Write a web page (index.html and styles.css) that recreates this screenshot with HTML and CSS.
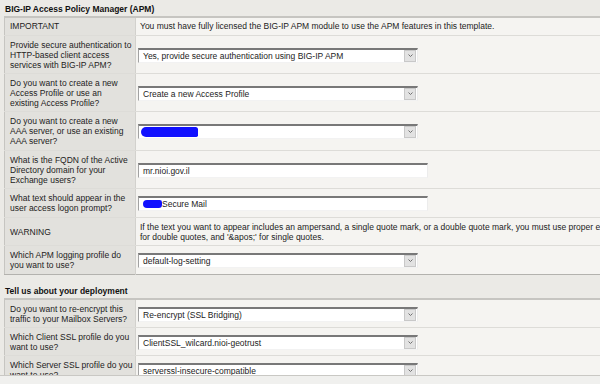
FILE: index.html
```html
<!DOCTYPE html>
<html lang="en">
<head>
  <meta charset="UTF-8" />
  <title>BIG-IP APM</title>
  <link rel="stylesheet" href="styles.css">
</head>
<body>
  <div class="page">
    <h2 class="section">BIG-IP Access Policy Manager (APM)</h2>
    <table class="form">
      <colgroup><col class="col-label"><col></colgroup>
      <tr class="short">
        <td class="label">IMPORTANT</td>
        <td class="value">You must have fully licensed the BIG-IP APM module to use the APM features in this template.</td>
      </tr>
      <tr>
        <td class="label">Provide secure authentication to<br>HTTP-based client access<br>services with BIG-IP APM?</td>
        <td class="value">
          <div class="select">
            <span class="select-text">Yes, provide secure authentication using BIG-IP APM</span>
            <span class="select-btn"><svg width="5" height="3" viewBox="0 0 5 3"><path d="M0.5 0.5 L2.5 2.5 L4.5 0.5" fill="none" stroke="#707070" stroke-width="1"/></svg></span>
          </div>
        </td>
      </tr>
      <tr>
        <td class="label">Do you want to create a new<br>Access Profile or use an<br>existing Access Profile?</td>
        <td class="value">
          <div class="select">
            <span class="select-text">Create a new Access Profile</span>
            <span class="select-btn"><svg width="5" height="3" viewBox="0 0 5 3"><path d="M0.5 0.5 L2.5 2.5 L4.5 0.5" fill="none" stroke="#707070" stroke-width="1"/></svg></span>
          </div>
        </td>
      </tr>
      <tr class="tall">
        <td class="label">Do you want to create a new<br>AAA server, or use an existing<br>AAA server?</td>
        <td class="value">
          <div class="select">
            <span class="select-text"><span class="redact redact-long"></span></span>
            <span class="select-btn"><svg width="5" height="3" viewBox="0 0 5 3"><path d="M0.5 0.5 L2.5 2.5 L4.5 0.5" fill="none" stroke="#707070" stroke-width="1"/></svg></span>
          </div>
        </td>
      </tr>
      <tr>
        <td class="label">What is the FQDN of the Active<br>Directory domain for your<br>Exchange users?</td>
        <td class="value"><div class="field">mr.nioi.gov.il</div></td>
      </tr>
      <tr class="tall">
        <td class="label">What text should appear in the<br>user access logon prompt?</td>
        <td class="value"><div class="field"><span class="redact redact-short"></span>Secure Mail</div></td>
      </tr>
      <tr>
        <td class="label">WARNING</td>
        <td class="value">If the text you want to appear includes an ampersand, a single quote mark, or a double quote mark, you must use proper escaping: '&amp;amp;' for ampersands, '&amp;quot;'<br>for double quotes, and '&amp;apos;' for single quotes.</td>
      </tr>
      <tr class="tall">
        <td class="label">Which APM logging profile do<br>you want to use?</td>
        <td class="value">
          <div class="select">
            <span class="select-text">default-log-setting</span>
            <span class="select-btn"><svg width="5" height="3" viewBox="0 0 5 3"><path d="M0.5 0.5 L2.5 2.5 L4.5 0.5" fill="none" stroke="#707070" stroke-width="1"/></svg></span>
          </div>
        </td>
      </tr>
    </table>

    <h2 class="section section-gap">Tell us about your deployment</h2>
    <table class="form">
      <colgroup><col class="col-label"><col></colgroup>
      <tr>
        <td class="label">Do you want to re-encrypt this<br>traffic to your Mailbox Servers?</td>
        <td class="value">
          <div class="select">
            <span class="select-text">Re-encrypt (SSL Bridging)</span>
            <span class="select-btn"><svg width="5" height="3" viewBox="0 0 5 3"><path d="M0.5 0.5 L2.5 2.5 L4.5 0.5" fill="none" stroke="#707070" stroke-width="1"/></svg></span>
          </div>
        </td>
      </tr>
      <tr>
        <td class="label">Which Client SSL profile do you<br>want to use?</td>
        <td class="value">
          <div class="select">
            <span class="select-text">ClientSSL_wilcard.nioi-geotrust</span>
            <span class="select-btn"><svg width="5" height="3" viewBox="0 0 5 3"><path d="M0.5 0.5 L2.5 2.5 L4.5 0.5" fill="none" stroke="#707070" stroke-width="1"/></svg></span>
          </div>
        </td>
      </tr>
      <tr>
        <td class="label">Which Server SSL profile do you<br>want to use?</td>
        <td class="value">
          <div class="select">
            <span class="select-text">serverssl-insecure-compatible</span>
            <span class="select-btn"><svg width="5" height="3" viewBox="0 0 5 3"><path d="M0.5 0.5 L2.5 2.5 L4.5 0.5" fill="none" stroke="#707070" stroke-width="1"/></svg></span>
          </div>
        </td>
      </tr>
    </table>
  </div>
</body>
</html>
```

FILE: styles.css
```css
body {
  margin: 0;
  background: #f0f0ee;
  font-family: "Liberation Sans", Arial, sans-serif;
  font-size: 8.5px;
  color: #1c1c1c;
  overflow: hidden;
}

.page {
  height: 375px;
  overflow: hidden;
  background: #ebeae6;
  border-bottom: 1px solid #c9c8c4;
}

.section {
  margin: 0;
  padding: 4px 5px 2px;
  font-size: 8.5px;
  line-height: 10px;
  font-weight: bold;
  color: #111;
}

.section-gap {
  padding-top: 11px;
}

.form {
  border-collapse: collapse;
  table-layout: fixed;
  width: 720px;
  margin-left: 4px;
  border-top: 2px solid #c6c5c1;
  border-left: 1px solid #c6c5c1;
  border-bottom: 1px solid #b3b2ae;
}

.col-label {
  width: 131px;
}

.form td {
  padding: 4px 4px 3px;
  line-height: 10px;
  vertical-align: middle;
  border-bottom: 1px solid #dddcd8;
}

.form tr.tall td {
  padding-bottom: 4px;
}

.form .label {
  padding-left: 5px;
  padding-right: 0;
  white-space: nowrap;
  background: #e2e1dd;
  border-right: 1px solid #d2d1cd;
  color: #222;
}

.form .value {
  background: #f5f4f1;
  white-space: nowrap;
  overflow: hidden;
}

.form tr.short td {
  padding-top: 3px;
  padding-bottom: 4px;
}

.form tr:last-child td {
  border-bottom: none;
}

.select,
.field {
  display: flex;
  align-items: center;
  box-sizing: border-box;
  height: 15px;
  background: #fff;
  border-top: 2px solid #787878;
  border-left: 1px solid #a2a2a2;
  border-right: 1px solid #ececec;
  border-bottom: 1px solid #f2f2f2;
  margin-left: -2px;
}

.select {
  width: 280px;
}

.field {
  width: 290px;
  padding-left: 4px;
}

.select-text {
  flex: 1;
  padding-left: 4px;
  overflow: hidden;
}

.select-btn {
  display: flex;
  align-items: center;
  justify-content: center;
  width: 10px;
  height: 10px;
  margin-right: 1px;
  background: #e2e2e2;
  border: 1px solid #c8c8c8;
}

.redact {
  display: inline-block;
  vertical-align: middle;
  background: #1010ff;
}

.redact-long {
  width: 57px;
  height: 10px;
  margin-left: -2px;
  border-radius: 6px 3px 2px 6px;
}

.redact-short {
  width: 19px;
  height: 8px;
  border-radius: 5px 3px 4px 5px;
}
```
